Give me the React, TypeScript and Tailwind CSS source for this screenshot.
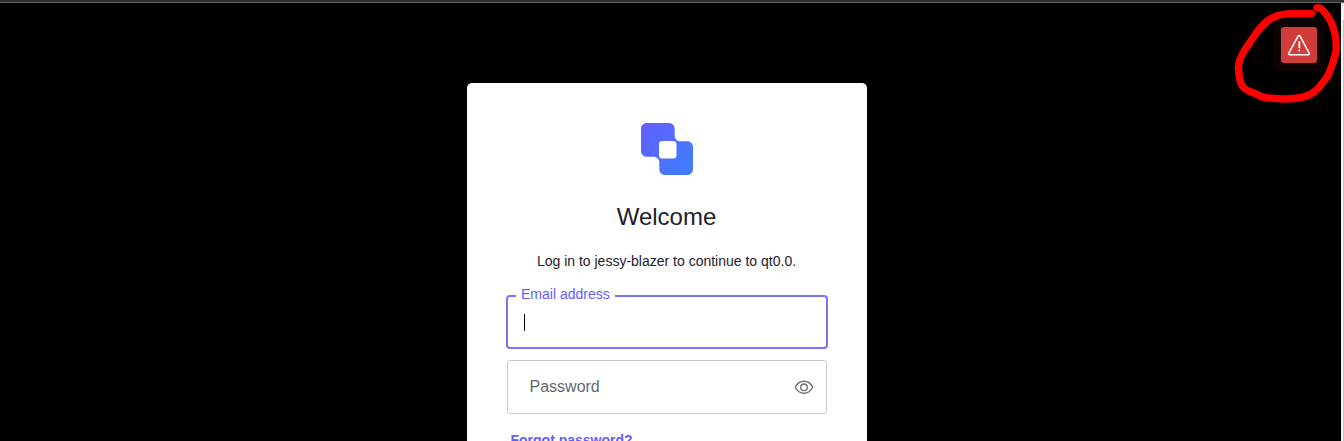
import React from "react";

function Logo() {
  return (
    <svg className="h-[52px] w-[52px]" viewBox="0 0 52 52">
      <defs>
        <linearGradient id="brand" x1="0" y1="0" x2="1" y2="1">
          <stop offset="0" stopColor="#635dff" />
          <stop offset="1" stopColor="#3c80ff" />
        </linearGradient>
      </defs>
      <path
        fill="url(#brand)"
        fillRule="evenodd"
        d="M6 0H27.7C31.2 0 33.7 2.5 33.7 6V12.5C33.7 16 36 18.3 39.5 18.3H46C49.5 18.3 52 20.8 52 24.3V46C52 49.5 49.5 52 46 52H24.3C20.8 52 18.3 49.5 18.3 46V39.5C18.3 36 16 33.7 12.5 33.7H6C2.5 33.7 0 31.2 0 27.7V6C0 2.5 2.5 0 6 0ZM21.2 18A3.2 3.2 0 0 0 18 21.2V32.3A3.2 3.2 0 0 0 21.2 35.5H32.3A3.2 3.2 0 0 0 35.5 32.3V21.2A3.2 3.2 0 0 0 32.3 18Z"
      />
    </svg>
  );
}

function EyeIcon() {
  return (
    <svg className="h-[14px] w-[20px]" viewBox="0 0 20 14" fill="none" stroke="#6f7278" strokeWidth="1.4" strokeLinejoin="round">
      <path d="M1.3 7.3C3.2 3.4 6.3 1.3 10 1.3S16.8 3.4 18.7 7.3C16.8 11.2 13.7 13.3 10 13.3S3.2 11.2 1.3 7.3Z" />
      <circle cx="10" cy="7.3" r="3.3" />
    </svg>
  );
}

function WarningIcon() {
  return (
    <svg className="h-[24px] w-[24px]" viewBox="0 0 24 24" fill="none" stroke="#fff" strokeWidth="1.5" strokeLinejoin="round" strokeLinecap="round">
      <path d="M11.2 2.9a1 1 0 0 1 1.7 0L22.3 20.3a.9.9 0 0 1-.8 1.4H2.5a.9.9 0 0 1-.8-1.4Z" />
      <path d="M12.3 8.8V14.6M12.3 17.3V17.6" strokeWidth="1.8" />
    </svg>
  );
}

export default function App() {
  return (
    <div className="relative flex h-[441px] w-full flex-col overflow-hidden bg-black font-['Liberation_Sans',Arial,sans-serif] text-[#1e212a]">
      <div className="h-[3px] shrink-0 border-b border-[#636363] bg-[#303030]" />
      <div className="flex min-h-0 flex-1">
        <main className="flex flex-1 items-start pt-[80px] pl-[467px]">
          <section className="flex h-[500px] w-[400px] shrink-0 flex-col rounded-[5px] bg-white px-[40px] pt-[40px]">
            <div className="flex justify-center">
              <Logo />
            </div>
            <h1 className="mt-[27px] pr-px text-center text-[24px] leading-[29px]">Welcome</h1>
            <p className="mt-[20px] pr-px text-center text-[14px] leading-[21px]">Log in to jessy-blazer to continue to qt0.0.</p>
            <div className="relative -mx-px mt-[23px] flex h-[54px] shrink-0 items-center rounded-[4px] border-2 border-[#7973ff] pl-[16px]">
              <label className="absolute -top-[11px] left-[8px] bg-white px-[5px] text-[14px] leading-[16px] text-[#635dff]">Email address</label>
              <span className="h-[17px] w-px bg-black" />
            </div>
            <div className="mt-[11px] flex h-[54px] shrink-0 items-center justify-between rounded-[3px] border border-[#c9cace] pr-[12px] pl-[21.5px]">
              <span className="text-[16px] leading-[20px] text-[#65676e]">Password</span>
              <EyeIcon />
            </div>
            <a className="mt-[17px] pl-[3.5px] text-[14px] leading-[19px] font-bold text-[#635dff]">Forgot password?</a>
          </section>
        </main>
        <div className="flex w-[3px] shrink-0 flex-col bg-[#f1f1f1] pt-[17px]">
          <div className="ml-[2px] flex-1 bg-[#c1c1c1]" />
        </div>
      </div>
      <div className="absolute top-[19px] left-[1273px] rounded-[8px] bg-[#0d0303] p-[8px]">
        <div className="flex h-[36px] w-[36px] items-center justify-center rounded-[3px] bg-[#d03c38]">
          <WarningIcon />
        </div>
      </div>
      <svg className="absolute top-0 left-[1224px] h-[110px] w-[120px]" viewBox="0 0 120 110" fill="none" stroke="#ff0000" strokeWidth="7.4" strokeLinecap="round" strokeLinejoin="round">
        <path d="M87.5 13.6H66C58 14 52 15.5 47 18.5C41 22 37 27 33 32L22 48C18 54 14.4 60 14.4 68C14.8 77 16 84 20 88C25 93 31 92 36 96C41 98.8 53 98.5 61 99C71 98.8 80 98 87 94C95 89.5 98 83 103 77C108 68 109.5 60 112 52C112.6 44 112 37 110.5 32C108.5 23 106 19 101.5 13.5C99 10 96 7 93 7.8" />
      </svg>
    </div>
  );
}
